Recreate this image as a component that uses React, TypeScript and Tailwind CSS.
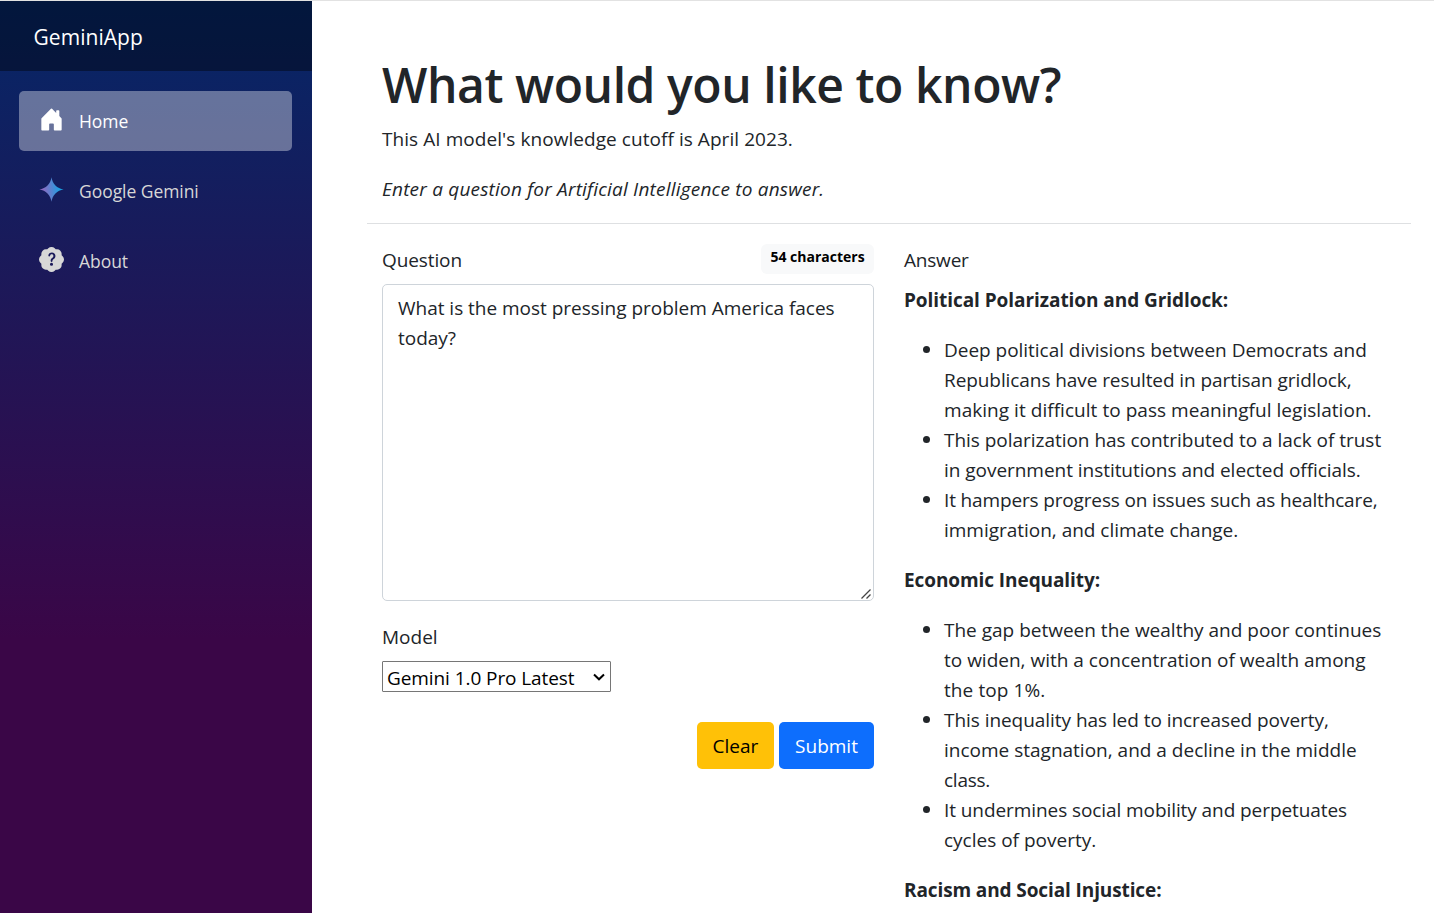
import { useState, type ReactNode } from "react";
import { BsHouseDoorFill, BsPatchQuestionFill } from "react-icons/bs";

function GeminiStar() {
  return (
    <svg viewBox="0 0 25 25" className="size-[25px]" aria-hidden="true">
      <defs>
        <linearGradient id="star" x1="0" x2="1" y1="0.55" y2="0.45">
          <stop offset="0.1" stopColor="#9168c0" />
          <stop offset="0.5" stopColor="#5684d1" />
          <stop offset="0.85" stopColor="#1ba1e3" />
        </linearGradient>
      </defs>
      <path
        fill="url(#star)"
        d="M12.5 0.3C13.3 6.6 18.2 11.7 24.6 12.5C18.2 13.3 13.3 18.4 12.5 24.7C11.7 18.4 6.8 13.3 0.4 12.5C6.8 11.7 11.7 6.6 12.5 0.3Z"
      />
    </svg>
  );
}

function NavItem({ icon, label, active = false }: { icon: ReactNode; label: string; active?: boolean }) {
  return (
    <a
      href="#"
      className={
        "flex h-[60px] items-center gap-[15px] rounded-[5px] px-5 text-[17.5px] tracking-[-0.05px] " +
        (active ? "bg-white/[0.37] text-white" : "text-[#d7d7d7]")
      }
    >
      <span className="-mt-1 size-[25px]">{icon}</span>
      <span>{label}</span>
    </a>
  );
}

type Line = { text: string; track?: string };
type Section = { title: Line; items: Line[][] };

const sections: Section[] = [
  {
    title: { text: "Political Polarization and Gridlock:", track: "tracking-[-0.06px]" },
    items: [
      [
        { text: "Deep political divisions between Democrats and", track: "tracking-[-0.03px]" },
        { text: "Republicans have resulted in partisan gridlock,", track: "tracking-[-0.08px]" },
        { text: "making it difficult to pass meaningful legislation.", track: "tracking-[0.04px]" },
      ],
      [
        { text: "This polarization has contributed to a lack of trust", track: "tracking-[-0.03px]" },
        { text: "in government institutions and elected officials.", track: "tracking-[-0.04px]" },
      ],
      [
        { text: "It hampers progress on issues such as healthcare,", track: "tracking-[-0.15px]" },
        { text: "immigration, and climate change.", track: "tracking-[-0.02px]" },
      ],
    ],
  },
  {
    title: { text: "Economic Inequality:", track: "tracking-[-0.08px]" },
    items: [
      [
        { text: "The gap between the wealthy and poor continues" },
        { text: "to widen, with a concentration of wealth among" },
        { text: "the top 1%.", track: "tracking-[0.1px]" },
      ],
      [
        { text: "This inequality has led to increased poverty,", track: "tracking-[-0.05px]" },
        { text: "income stagnation, and a decline in the middle" },
        { text: "class.", track: "tracking-[-0.25px]" },
      ],
      [
        { text: "It undermines social mobility and perpetuates", track: "tracking-[-0.08px]" },
        { text: "cycles of poverty." },
      ],
    ],
  },
  {
    title: { text: "Racism and Social Injustice:", track: "tracking-[-0.11px]" },
    items: [],
  },
];

export default function App() {
  const [question, setQuestion] = useState("What is the most pressing problem America faces today?");

  return (
    <div className="flex h-screen flex-col overflow-hidden border-t border-[#e2e2e2] bg-white font-['Open_Sans','Noto_Sans',sans-serif] text-[19px] leading-[30px] text-[#212529]">
      <div className="flex min-h-0 flex-1">
        <aside className="w-[312px] shrink-0 bg-[linear-gradient(180deg,rgb(5,39,103)_0%,#3a0647_70%)]">
          <div className="flex h-[70px] items-center bg-black/40 pb-0.5 pl-[33.5px] pt-1 text-[21px] tracking-[0.05px] text-white">GeminiApp</div>
          <nav className="flex flex-col gap-2.5 pl-[19px] pr-5 pt-5">
            <NavItem icon={<BsHouseDoorFill className="size-[25px]" />} label="Home" active />
            <NavItem icon={<GeminiStar />} label="Google Gemini" />
            <NavItem icon={<BsPatchQuestionFill className="size-[25px]" />} label="About" />
          </nav>
        </aside>

        <main className="min-w-0 flex-1 pl-[55px] pr-[23px] pt-[53px]">
          <header className="h-[170px] px-[15px]">
            <h1 className="h-[70px] whitespace-nowrap text-[48px] font-semibold leading-[62px] tracking-[-0.43px]">
              What would you like to know?
            </h1>
            <p className="mb-5 tracking-[0.06px]">This AI model's knowledge cutoff is April 2023.</p>
            <p className="italic tracking-[0.2px]">Enter a question for Artificial Intelligence to answer.</p>
          </header>
          <hr className="mt-[-1px] border-[#dee0e2]" />

          <div className="flex gap-[30px] px-[15px] pt-5">
            <section className="w-[492px] shrink-0">
              <div className="flex h-10 items-start justify-between">
                <label htmlFor="question" className="pt-px tracking-[-0.1px]">Question</label>
                <span className="flex h-[30px] w-[113px] items-start justify-center rounded-md bg-[#f8f9fa] pt-[3px] text-[14px] font-bold leading-5 text-black">
                  {question.length} characters
                </span>
              </div>
              <div className="relative">
                <textarea
                  id="question"
                  value={question}
                  onChange={(e) => setQuestion(e.target.value)}
                  className="block h-[317px] w-full resize-none rounded-[5px] border border-[#ced4da] px-[15px] py-2 tracking-[-0.02px] outline-none"
                />
                <svg viewBox="0 0 10 10" className="pointer-events-none absolute bottom-[2px] right-[3px] size-[10px]" aria-hidden="true">
                  <path d="M0.5 9.5L9.5 0.5M5.5 9.5L9.5 5.5" stroke="#444" strokeWidth="1.3" fill="none" />
                </svg>
              </div>
              <label htmlFor="model" className="mt-[21px] block">Model</label>
              <div className="relative mt-[9px] w-[229px]">
                <select
                  id="model"
                  className="block h-[31px] w-full appearance-none rounded-[1px] border border-[#767676] bg-white pb-0 pl-1 pt-px text-black outline-none tracking-[-0.08px]"
                >
                  <option>Gemini 1.0 Pro Latest</option>
                </select>
                <svg viewBox="0 0 12 8" className="pointer-events-none absolute right-[6px] top-[12px] h-2 w-3" aria-hidden="true">
                  <path d="M1 1.5L6 6.3L11 1.5" stroke="#000" strokeWidth="2" fill="none" />
                </svg>
              </div>
              <div className="mt-[30px] flex justify-end gap-[5px]">
                <button onClick={() => setQuestion("")} className="h-[47px] w-[77px] rounded-[5px] bg-[#ffc107] text-black">
                  Clear
                </button>
                <button className="h-[47px] w-[95px] rounded-[5px] bg-[#0d6efd] text-white">Submit</button>
              </div>
            </section>

            <section className="min-w-0 flex-1 pt-px">
              <div className="h-10 tracking-[-0.2px]">Answer</div>
              {sections.map(({ title, items }) => (
                <div key={title.text} className="mb-5">
                  <p className={"mb-5 whitespace-nowrap font-bold " + (title.track ?? "")}>{title.text}</p>
                  <ul className="list-disc pl-10 marker:text-[20px]">
                    {items.map((lines) => (
                      <li key={lines[0].text}>
                        {lines.map(({ text, track }) => (
                          <span key={text} className={"block whitespace-nowrap " + (track ?? "")}>{text}</span>
                        ))}
                      </li>
                    ))}
                  </ul>
                </div>
              ))}
            </section>
          </div>
        </main>
      </div>
    </div>
  );
}
